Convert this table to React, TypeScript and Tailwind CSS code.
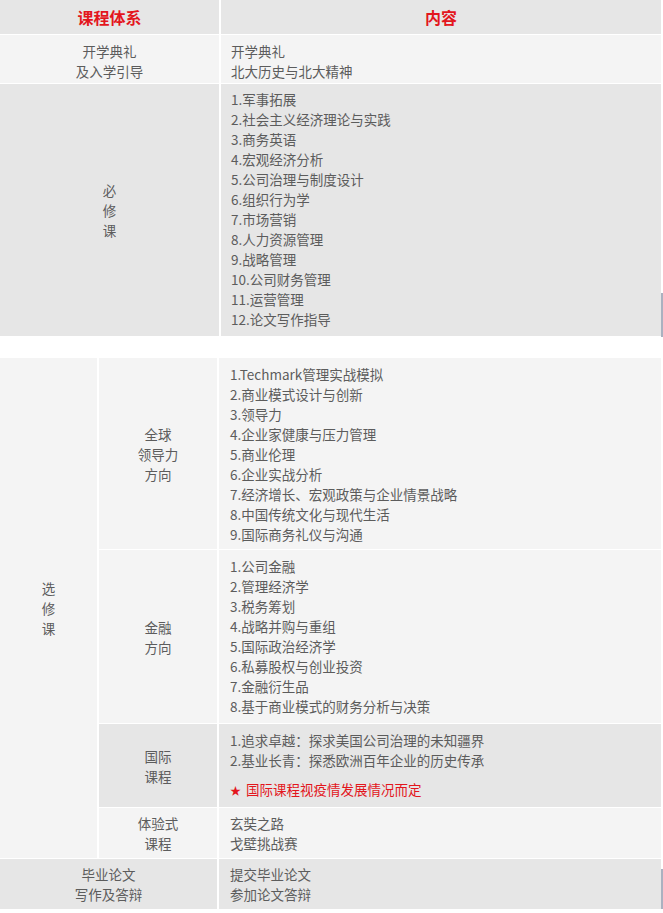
const font = { fontFamily: '"Noto Sans CJK SC", "Noto Sans", sans-serif' };

const required = [
  '1.军事拓展',
  '2.社会主义经济理论与实践',
  '3.商务英语',
  '4.宏观经济分析',
  '5.公司治理与制度设计',
  '6.组织行为学',
  '7.市场营销',
  '8.人力资源管理',
  '9.战略管理',
  '10.公司财务管理',
  '11.运营管理',
  '12.论文写作指导',
];

const leadership = [
  '1.Techmark管理实战模拟',
  '2.商业模式设计与创新',
  '3.领导力',
  '4.企业家健康与压力管理',
  '5.商业伦理',
  '6.企业实战分析',
  '7.经济增长、宏观政策与企业情景战略',
  '8.中国传统文化与现代生活',
  '9.国际商务礼仪与沟通',
];

const finance = [
  '1.公司金融',
  '2.管理经济学',
  '3.税务筹划',
  '4.战略并购与重组',
  '5.国际政治经济学',
  '6.私募股权与创业投资',
  '7.金融衍生品',
  '8.基于商业模式的财务分析与决策',
];

function Lines({ items }: { items: string[] }) {
  return (
    <>
      {items.map((t) => (
        <div key={t}>{t}</div>
      ))}
    </>
  );
}

export default function App() {
  return (
    <div className="relative w-[663px] bg-white text-[13.5px] leading-[20px] text-[#5c5c5c]" style={font}>
      {/* table 1 */}
      <div className="grid w-[661px] grid-cols-[219px_1fr] gap-x-[2px] gap-y-[1px] bg-white">
        <div className="flex h-[34px] items-center justify-center bg-[#e6e6e6] text-[16px] font-bold text-[#e3161d]">
          课程体系
        </div>
        <div className="flex h-[34px] items-center justify-center bg-[#e6e6e6] text-[16px] font-bold text-[#e3161d]">
          内容
        </div>

        <div className="flex flex-col items-center justify-center bg-[#f4f4f4] pt-[6px] pb-[2px]">
          <div>开学典礼</div>
          <div>及入学引导</div>
        </div>
        <div className="flex flex-col justify-center bg-[#f4f4f4] pt-[6px] pb-[2px] pl-[10px]">
          <div>开学典礼</div>
          <div>北大历史与北大精神</div>
        </div>

        <div className="flex flex-col items-center justify-center bg-[#e6e6e6]">
          <div>必</div>
          <div>修</div>
          <div>课</div>
        </div>
        <div className="bg-[#e6e6e6] pt-[5px] pb-[7px] pl-[10px]">
          <Lines items={required} />
        </div>
      </div>

      <div className="h-[22px]" />

      {/* table 2 */}
      <div className="grid w-[661px] grid-cols-[97px_118px_1fr] gap-x-[2px] gap-y-[1px] bg-white">
        <div className="row-span-4 flex flex-col items-center justify-center bg-[#f4f4f4]">
          <div>选</div>
          <div>修</div>
          <div>课</div>
        </div>

        <div className="flex flex-col items-center justify-center bg-[#f4f4f4]">
          <div>全球</div>
          <div>领导力</div>
          <div>方向</div>
        </div>
        <div className="bg-[#f4f4f4] pt-[6px] pb-[5px] pl-[11px]">
          <Lines items={leadership} />
        </div>

        <div className="flex flex-col items-center justify-center bg-[#f4f4f4]">
          <div>金融</div>
          <div>方向</div>
        </div>
        <div className="bg-[#f4f4f4] pt-[6px] pb-[7px] pl-[11px]">
          <Lines items={finance} />
        </div>

        <div className="flex flex-col items-center justify-center bg-[#e6e6e6]">
          <div>国际</div>
          <div>课程</div>
        </div>
        <div className="bg-[#e6e6e6] pt-[6px] pb-[7px] pl-[11px]">
          <div>1.追求卓越：探求美国公司治理的未知疆界</div>
          <div>2.基业长青：探悉欧洲百年企业的历史传承</div>
          <div className="mt-[9px] text-[#e3161d]">
            <span className="mr-[5px] text-[11px]">★</span>国际课程视疫情发展情况而定
          </div>
        </div>

        <div className="flex flex-col items-center justify-center bg-[#f4f4f4]">
          <div>体验式</div>
          <div>课程</div>
        </div>
        <div className="bg-[#f4f4f4] py-[5px] pl-[11px]">
          <div>玄奘之路</div>
          <div>戈壁挑战赛</div>
        </div>

        <div className="col-span-2 flex flex-col items-center justify-center bg-[#e6e6e6]">
          <div>毕业论文</div>
          <div>写作及答辩</div>
        </div>
        <div className="bg-[#e6e6e6] py-[5px] pl-[11px]">
          <div>提交毕业论文</div>
          <div>参加论文答辩</div>
        </div>
      </div>

      {/* scrollbar edge remnants */}
      <div className="absolute left-[661px] top-[293px] h-[44px] w-[2px] bg-[#aab1c0]" />
      <div className="absolute left-[661px] top-[869px] h-[40px] w-[2px] bg-[#aab1c0]" />
    </div>
  );
}
